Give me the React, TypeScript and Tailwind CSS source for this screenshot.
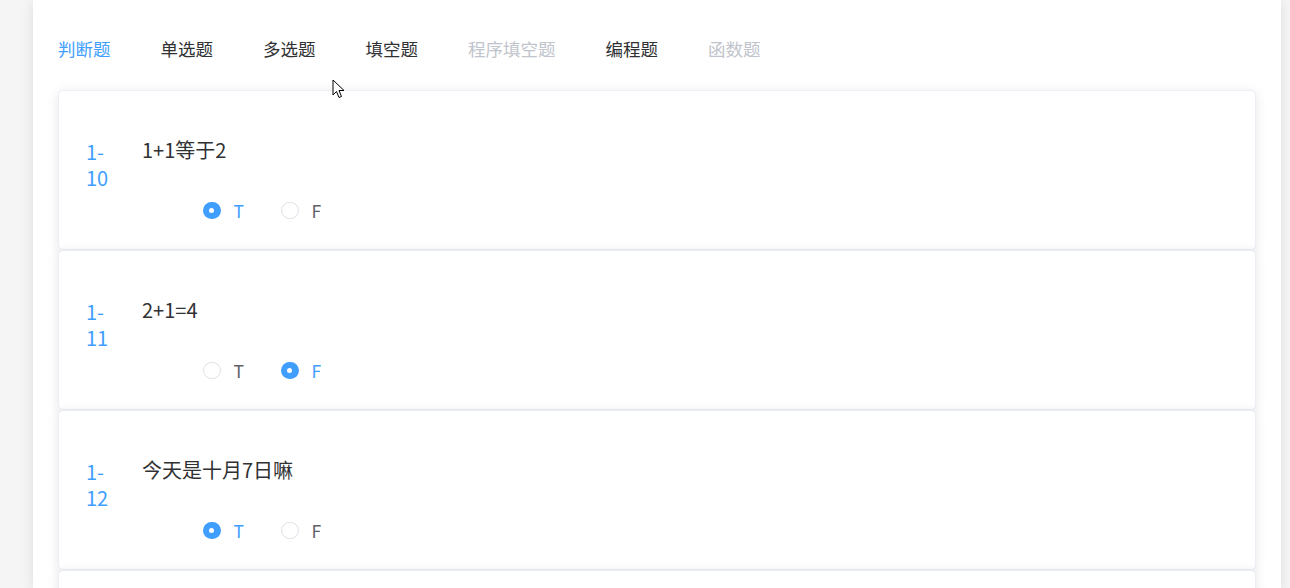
import React from "react";

const TABS = [
  { label: "判断题", state: "active" },
  { label: "单选题", state: "normal" },
  { label: "多选题", state: "normal" },
  { label: "填空题", state: "normal" },
  { label: "程序填空题", state: "disabled" },
  { label: "编程题", state: "normal" },
  { label: "函数题", state: "disabled" },
];

const QUESTIONS = [
  { a: "1", b: "10", text: "1+1等于2", answer: "T" },
  { a: "1", b: "11", text: "2+1=4", answer: "F" },
  { a: "1", b: "12", text: "今天是十月7日嘛", answer: "T" },
];

function Radio({ label, checked }: { label: string; checked: boolean }) {
  return (
    <div className="flex items-center w-[78px] h-[26px]">
      {checked ? (
        <span className="w-[17.5px] h-[17.5px] rounded-full bg-[#409eff] flex items-center justify-center">
          <span className="w-[5px] h-[5px] rounded-full bg-white" />
        </span>
      ) : (
        <span className="w-[17.5px] h-[17.5px] rounded-full border border-[#dcdfe6] bg-white" />
      )}
      <span
        className={`ml-[13px] text-[17.5px] leading-[26px] ${checked ? "text-[#409eff]" : "text-[#606266]"}`}
      >
        {label}
      </span>
    </div>
  );
}

function QuestionCard({ q }: { q: (typeof QUESTIONS)[number] }) {
  return (
    <div className="h-[160px] shrink-0 bg-white border border-[#ebeef5] rounded-[5px] shadow-[0_2px_12px_0_rgba(0,0,0,0.1)] flex pl-[27px] pt-[46px]">
      <div className="w-[56px] mt-[2px] text-[20px] leading-[26px] text-[#409eff]">
        {q.a}-
        <br />
        {q.b}
      </div>
      <div className="flex flex-col">
        <div className="text-[20px] leading-[26px] text-[#303133]">{q.text}</div>
        <div className="flex ml-[61px] mt-[35px]">
          <Radio label="T" checked={q.answer === "T"} />
          <Radio label="F" checked={q.answer === "F"} />
        </div>
      </div>
    </div>
  );
}

export default function App() {
  return (
    <div
      className="w-[1290px] h-[588px] overflow-hidden bg-[#f5f5f5] flex"
      style={{ fontFamily: '"Noto Sans CJK SC", "Liberation Sans", sans-serif' }}
    >
      <div className="ml-[33px] w-[1248px] h-full bg-white shadow-[0_2px_12px_0_rgba(0,0,0,0.1)] px-[25px] pt-[27px] flex flex-col relative">
        <div className="flex gap-[50px] h-[43px]">
          {TABS.map((t) => (
            <div
              key={t.label}
              className={`text-[17.5px] leading-[43px] ${
                t.state === "active"
                  ? "text-[#409eff]"
                  : t.state === "disabled"
                    ? "text-[#c0c4cc]"
                    : "text-[#303133]"
              }`}
            >
              {t.label}
            </div>
          ))}
        </div>
        <div className="h-[2.5px] bg-[#e4e7ed] flex">
          <div className="w-[52.5px] h-full bg-[#409eff]" />
        </div>
        <div className="mt-[19.5px] flex flex-col">
          {QUESTIONS.map((q) => (
            <QuestionCard key={q.b} q={q} />
          ))}
          <div className="h-[160px] shrink-0 bg-white border border-[#ebeef5] rounded-[5px] shadow-[0_2px_12px_0_rgba(0,0,0,0.1)]" />
        </div>
        <svg
          className="absolute left-[299px] top-[79px]"
          width="14"
          height="20"
          viewBox="0 0 14 20"
        >
          <path
            d="M1 1 L1 16 L4.5 12.5 L7 18.5 L9.5 17.5 L7 11.5 L12 11.5 Z"
            fill="#fff"
            stroke="#000"
            strokeWidth="1"
            strokeLinejoin="round"
          />
        </svg>
      </div>
    </div>
  );
}
